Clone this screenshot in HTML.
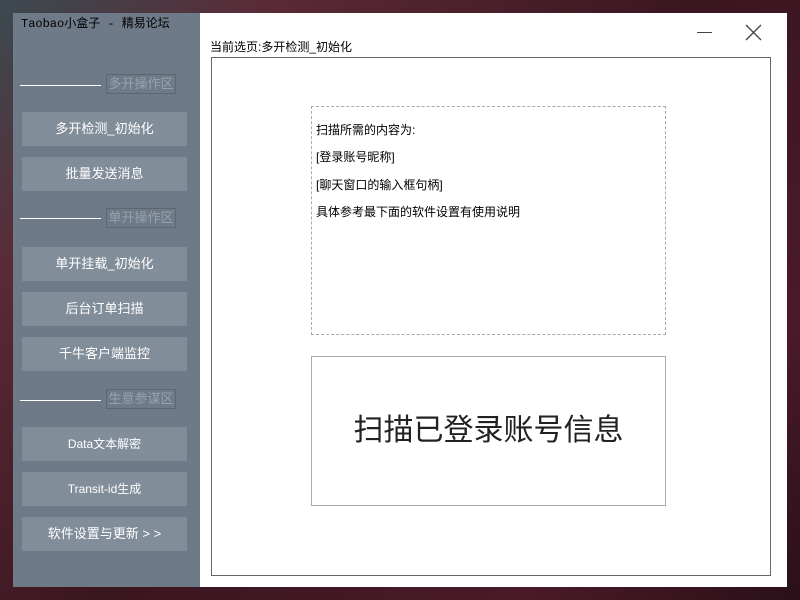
<!DOCTYPE html>
<html><head><meta charset="utf-8"><style>
*{margin:0;padding:0;box-sizing:border-box}
body{width:800px;height:600px;overflow:hidden;position:relative;font-family:"Liberation Sans","Noto Sans CJK SC",sans-serif;font-size:12px;background:linear-gradient(135deg,#3c4a50 0%,#5a2a36 20%,#3a1620 50%,#4a1a28 80%,#2a1018 100%)}
.a{position:absolute}
#side{left:13px;top:13px;width:187px;height:574px;background:#6e7a88}
#main{left:200px;top:13px;width:587px;height:574px;background:#fff}
.btn{position:absolute;left:9px;width:165px;height:34px;background:#828d9a;color:#fff;text-align:center;line-height:34px;font-size:13px}
.line{position:absolute;left:7px;width:81px;height:1px;background:#fff}
.lbl{position:absolute;left:93px;width:70px;height:20px;border:1px solid #5e6670;color:#98a2ae;font-size:13px;line-height:18px;text-align:center}
.t{position:absolute;left:4px;font-size:12px;color:#000}
</style></head><body>
<div class="a" id="side">
<div style="position:absolute;left:8px;top:1px;font-family:'Liberation Mono','Noto Sans CJK SC',monospace;font-size:12px;color:#000">Taobao小盒子 - 精易论坛</div>
<div class="line" style="top:72px"></div><div class="lbl" style="top:61px">多开操作区</div>
<div class="btn" style="top:99px">多开检测_初始化</div>
<div class="btn" style="top:144px">批量发送消息</div>
<div class="line" style="top:205px"></div><div class="lbl" style="top:195px">单开操作区</div>
<div class="btn" style="top:234px">单开挂载_初始化</div>
<div class="btn" style="top:279px">后台订单扫描</div>
<div class="btn" style="top:324px">千牛客户端监控</div>
<div class="line" style="top:387px"></div><div class="lbl" style="top:376px">生意参谋区</div>
<div class="btn" style="top:414px;font-size:12px">Data文本解密</div>
<div class="btn" style="top:459px;font-size:12px">Transit-id生成</div>
<div class="btn" style="top:504px">软件设置与更新 > ></div>
</div>
<div class="a" id="main">
<div style="position:absolute;left:10px;top:25px;font-size:12px">当前选页:多开检测_初始化</div>
<div style="position:absolute;left:497px;top:19px;width:15px;height:1px;background:#444"></div>
<svg style="position:absolute;left:545px;top:11px" width="18" height="18"><path d="M1 1L16 16M16 1L1 16" stroke="#444" stroke-width="1.3"/></svg>
<div style="position:absolute;left:11px;top:44px;width:560px;height:519px;border:1px solid #666"></div>
<div style="position:absolute;left:111px;top:93px;width:355px;height:229px;border:1px dashed #aaa">
<div class="t" style="top:14px">扫描所需的内容为:</div>
<div class="t" style="top:41px">[登录账号昵称]</div>
<div class="t" style="top:69px">[聊天窗口的输入框句柄]</div>
<div class="t" style="top:96px">具体参考最下面的软件设置有使用说明</div>
</div>
<div style="position:absolute;left:111px;top:343px;width:355px;height:150px;border:1px solid #aaa;text-align:center;line-height:148px;font-size:30px;color:#222">扫描已登录账号信息</div>
</div>
</body></html>
